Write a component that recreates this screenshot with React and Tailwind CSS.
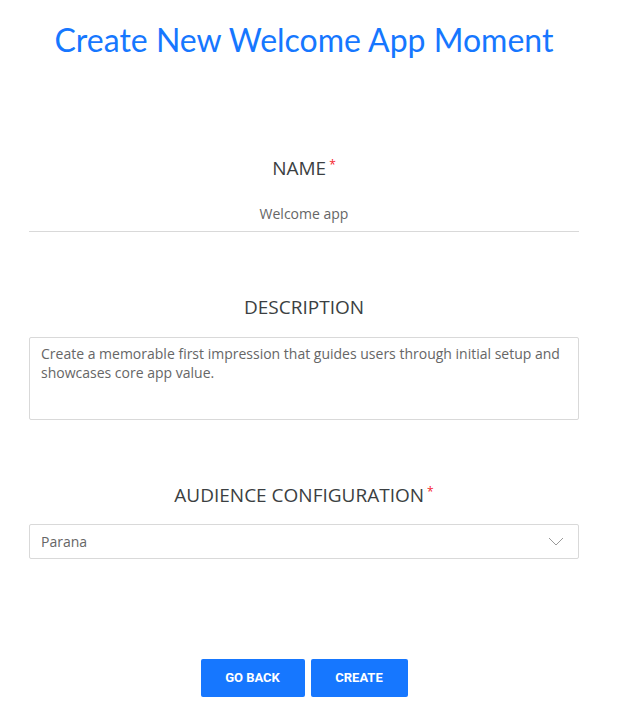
function Label({ children, required }) {
  return (
    <div className="h-[24px] text-center text-[19px] leading-[24px] text-[#3b3f42] uppercase">
      {children}
      {required ? (
        <span className="relative -top-[6px] ml-[3px] text-[12px] leading-none text-[#f5222d]">*</span>
      ) : null}
    </div>
  )
}

export default function App() {
  return (
    <div className="w-[608px] bg-white pt-[20px] pb-[30px] font-['Open_Sans',sans-serif]">
      <h1 className="text-center font-['Lato',sans-serif] text-[32px] leading-[40px] text-[#1677ff]">
        Create New Welcome App Moment
      </h1>

      <div className="ml-[29px] w-[550px]">
        <div className="mt-[96px]">
          <Label required>Name</Label>
          <div className="mt-[24px] border-b border-[#d9d9d9] pb-[7px] text-center text-[14px] leading-[20px] text-[#666]">
            Welcome app
          </div>
        </div>

        <div className="mt-[63px]">
          <Label>Description</Label>
          <div className="mt-[18px] h-[83px] rounded-[2px] border border-[#d9d9d9] px-[11px] py-[6px] text-[14px] leading-[19px] text-[#666]">
            Create a memorable first impression that guides users through initial setup and showcases core app value.
          </div>
        </div>

        <div className="mt-[63px]">
          <Label required>Audience Configuration</Label>
          <div className="mt-[17px] flex h-[35px] items-center justify-between rounded-[2px] border border-[#d9d9d9] pl-[11px] pr-[14px] text-[14px] text-[#666]">
            <span>Parana</span>
            <svg width="16" height="9" viewBox="0 0 16 9" fill="none" stroke="#9a9a9a" strokeWidth="1">
              <path d="M1 1l7 7 7-7" />
            </svg>
          </div>
        </div>

        <div className="mt-[100px] flex justify-center gap-[6px] font-['Roboto',sans-serif]">
          <button className="h-[38px] w-[104px] rounded-[2px] bg-[#1677ff] text-[13px] font-bold text-white">
            GO BACK
          </button>
          <button className="h-[38px] w-[97px] rounded-[2px] bg-[#1677ff] text-[13px] font-bold text-white">
            CREATE
          </button>
        </div>
      </div>
    </div>
  )
}
